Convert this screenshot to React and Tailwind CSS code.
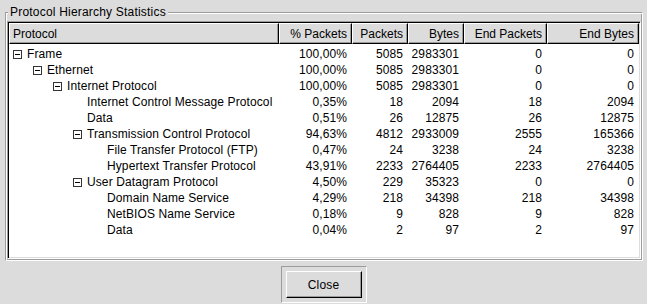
import React from "react";

const rows = [
  { name: "Frame", level: 0, open: true, pct: "100,00%", pk: "5085", by: "2983301", ep: "0", eb: "0" },
  { name: "Ethernet", level: 1, open: true, pct: "100,00%", pk: "5085", by: "2983301", ep: "0", eb: "0" },
  { name: "Internet Protocol", level: 2, open: true, pct: "100,00%", pk: "5085", by: "2983301", ep: "0", eb: "0" },
  { name: "Internet Control Message Protocol", level: 3, pct: "0,35%", pk: "18", by: "2094", ep: "18", eb: "2094" },
  { name: "Data", level: 3, pct: "0,51%", pk: "26", by: "12875", ep: "26", eb: "12875" },
  { name: "Transmission Control Protocol", level: 3, open: true, pct: "94,63%", pk: "4812", by: "2933009", ep: "2555", eb: "165366" },
  { name: "File Transfer Protocol (FTP)", level: 4, pct: "0,47%", pk: "24", by: "3238", ep: "24", eb: "3238" },
  { name: "Hypertext Transfer Protocol", level: 4, pct: "43,91%", pk: "2233", by: "2764405", ep: "2233", eb: "2764405" },
  { name: "User Datagram Protocol", level: 3, open: true, pct: "4,50%", pk: "229", by: "35323", ep: "0", eb: "0" },
  { name: "Domain Name Service", level: 4, pct: "4,29%", pk: "218", by: "34398", ep: "218", eb: "34398" },
  { name: "NetBIOS Name Service", level: 4, pct: "0,18%", pk: "9", by: "828", ep: "9", eb: "828" },
  { name: "Data", level: 4, pct: "0,04%", pk: "2", by: "97", ep: "2", eb: "97" },
];

const indent = ["pl-[4px]", "pl-[24px]", "pl-[44px]", "pl-[64px]", "pl-[84px]"];

const cols = [
  { key: "pct", label: "% Packets", w: "w-[73px]" },
  { key: "pk", label: "Packets", w: "w-[56px]" },
  { key: "by", label: "Bytes", w: "w-[56px]" },
  { key: "ep", label: "End Packets", w: "w-[83px]" },
  { key: "eb", label: "End Bytes", w: "w-[92px]" },
];

const headCell =
  "h-[21px] flex items-center border-t border-l border-b border-r border-t-white border-l-white border-b-black border-r-black shadow-[inset_-1px_-1px_0_#9c9c9c] bg-[#dcdcdc]";

function Expander() {
  return (
    <div className="w-[9px] h-[9px] border border-[#333] flex items-center justify-center mr-[5px] shrink-0">
      <div className="w-[5px] h-[1px] bg-black" />
    </div>
  );
}

export default function App() {
  return (
    <div className="w-[647px] h-[304px] bg-[#dcdcdc] font-['Liberation_Sans',Arial,sans-serif] text-[12px] text-black overflow-hidden pt-[5px]">
      <fieldset className="ml-[5px] w-[638px] border border-t-[#9c9c9c] border-l-[#9c9c9c] border-b-white border-r-white shadow-[inset_1px_1px_0_#fff,inset_-1px_-1px_0_#9c9c9c] pl-[1px] pr-[1px] pt-[2px] pb-[1px]">
        <legend className="ml-[1px] px-[2px] leading-[14px] bg-[#dcdcdc] tracking-[0.2px]">
          Protocol Hierarchy Statistics
        </legend>
        <div className="h-[238px] bg-white border border-t-[#9c9c9c] border-l-[#9c9c9c] border-b-white border-r-white shadow-[inset_1px_1px_0_#000,inset_-1px_-1px_0_#dcdcdc] p-[1px]">
          <div className="flex">
            <div className={`${headCell} w-[270px] pl-[3px]`}>Protocol</div>
            {cols.map((c) => (
              <div key={c.key} className={`${headCell} ${c.w} justify-end pr-[4px]`}>
                {c.label}
              </div>
            ))}
          </div>
          <div className="pt-[2px]">
            {rows.map((r, i) => (
              <div key={i} className="flex h-[16px] items-center leading-[16px] tracking-[0.1px]">
                <div className={`w-[270px] flex items-center ${indent[r.level]}`}>
                  {r.open ? <Expander /> : <div className="w-[9px] mr-[5px] shrink-0" />}
                  <span className="whitespace-nowrap">{r.name}</span>
                </div>
                {cols.map((c) => (
                  <div key={c.key} className={`${c.w} text-right pr-[5px]`}>
                    {r[c.key]}
                  </div>
                ))}
              </div>
            ))}
          </div>
        </div>
      </fieldset>
      <div className="flex justify-center mt-[5px]">
        <div className="border border-t-[#9c9c9c] border-l-[#9c9c9c] border-b-white border-r-white p-[4px]">
          <button className="w-[76px] h-[27px] bg-[#dcdcdc] border border-t-white border-l-white border-b-black border-r-black shadow-[inset_-1px_-1px_0_#9c9c9c] text-[12px] tracking-[0.2px]">
            Close
          </button>
        </div>
      </div>
    </div>
  );
}
